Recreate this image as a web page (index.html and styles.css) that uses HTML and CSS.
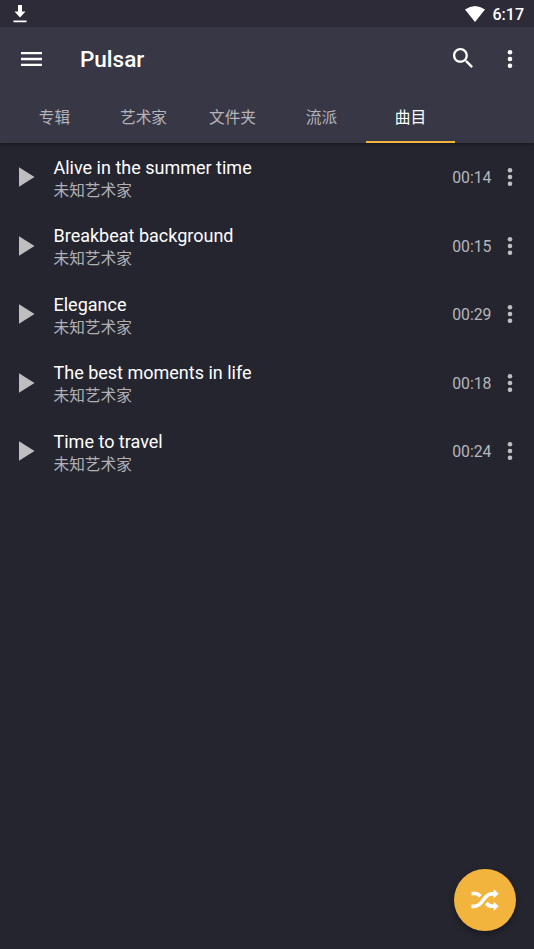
FILE: index.html
```html
<!DOCTYPE html>
<html lang="zh-CN">
<head>
<meta charset="utf-8">
<title>Pulsar</title>
<link rel="stylesheet" href="styles.css">
</head>
<body>
<svg class="defs" aria-hidden="true">
  <symbol id="play" viewBox="0 0 16 20"><path d="M0 0.3L15.5 10L0 19.7Z"/></symbol>
  <symbol id="dots" viewBox="0 0 6 20"><circle cx="3" cy="3.2" r="2.3"/><circle cx="3" cy="10" r="2.3"/><circle cx="3" cy="16.8" r="2.3"/></symbol>
</svg>
<header class="header">
  <div class="status">
    <svg class="download" viewBox="0 0 14 18"><path d="M5 0h4v6.500h3.500L7 12.500 1.500 6.500H5zM.5 15.500h13v1.800H.5z"/></svg>
    <svg class="wifi" viewBox="0 0 20 16"><path d="M0 3.500Q10-3.500 20 3.500L10 16Z"/></svg>
    <span class="clock">6:17</span>
  </div>
  <div class="toolbar">
    <svg class="menu" viewBox="0 0 21 14"><path d="M0 0h21v2.300H0zM0 5.850h21v2.300H0zM0 11.700h21V14H0z"/></svg>
    <h1 class="title">Pulsar</h1>
    <svg class="search" viewBox="3 3 17.500 17.500"><path d="M15.500 14h-.79l-.28-.27C15.410 12.590 16 11.110 16 9.500 16 5.910 13.090 3 9.500 3S3 5.910 3 9.500 5.910 16 9.500 16c1.610 0 3.090-.59 4.230-1.570l.27.28v.79l5 4.990L20.490 19l-4.990-5zm-6 0C7.010 14 5 11.990 5 9.500S7.010 5 9.500 5 14 7.010 14 9.500 11.990 14 9.500 14z"/></svg>
    <svg class="dots"><use href="#dots"/></svg>
  </div>
  <nav class="tabs">
    <span class="tab">专辑</span>
    <span class="tab">艺术家</span>
    <span class="tab">文件夹</span>
    <span class="tab">流派</span>
    <span class="tab active">曲目</span>
  </nav>
</header>
<main class="list">
  <div class="row"><svg class="play"><use href="#play"/></svg><div class="info"><div class="name">Alive in the summer time</div><div class="artist">未知艺术家</div></div><span class="time">00:14</span><svg class="dots"><use href="#dots"/></svg></div>
  <div class="row"><svg class="play"><use href="#play"/></svg><div class="info"><div class="name">Breakbeat background</div><div class="artist">未知艺术家</div></div><span class="time">00:15</span><svg class="dots"><use href="#dots"/></svg></div>
  <div class="row"><svg class="play"><use href="#play"/></svg><div class="info"><div class="name">Elegance</div><div class="artist">未知艺术家</div></div><span class="time">00:29</span><svg class="dots"><use href="#dots"/></svg></div>
  <div class="row"><svg class="play"><use href="#play"/></svg><div class="info"><div class="name">The best moments in life</div><div class="artist">未知艺术家</div></div><span class="time">00:18</span><svg class="dots"><use href="#dots"/></svg></div>
  <div class="row"><svg class="play"><use href="#play"/></svg><div class="info"><div class="name">Time to travel</div><div class="artist">未知艺术家</div></div><span class="time">00:24</span><svg class="dots"><use href="#dots"/></svg></div>
</main>
<button class="fab" aria-label="随机播放">
  <svg class="shuffle" viewBox="0 0 28 22"><g class="strokes"><path d="M0.500 4.500H4Q7 4.500 9.300 7.300"/><path d="M0.500 17.300H4C12 17.300 12.500 4.800 20.500 4.800H23.500"/><path d="M15.300 14Q17.800 17.200 20.500 17.200H23.500"/></g><path d="M22.700 0.300L27.700 4.800L22.700 9.300ZM22.700 12.700L27.700 17.200L22.700 21.700Z"/></svg>
</button>
</body>
</html>
```
FILE: styles.css
```css
* { box-sizing: border-box; }
body {
  margin: 0;
  height: 949px;
  overflow: hidden;
  background: #25252f;
  color: #fff;
  font-family: Roboto, "Noto Sans CJK SC", sans-serif;
}
svg { display: block; flex: none; fill: currentColor; }
.defs { position: absolute; width: 0; height: 0; }
.header {
  position: relative;
  height: 143px;
  background: #383745;
  box-shadow: 0 1px 4px rgba(0, 0, 0, .45);
}
.status {
  display: flex;
  align-items: center;
  height: 27px;
  padding: 0 10px 0 13px;
  background: #2c2b37;
}
.download { width: 14px; height: 18px; }
.wifi { width: 20px; height: 16px; margin: 0 8px 0 auto; }
.clock { font-size: 16px; font-weight: 500; line-height: 27px; padding-top: 1px; }
.toolbar {
  display: flex;
  align-items: center;
  height: 63px;
  padding: 0 21.500px 0 21px;
}
.menu { width: 21px; height: 14px; }
.title { margin: 0 auto 0 38px; font-size: 22.500px; font-weight: 500; line-height: 30px; }
.search { width: 20px; height: 20px; margin: 0 34px 1px 0; }
.dots { width: 6px; height: 20px; }
.tabs { display: flex; height: 53px; padding-left: 10px; }
.tab {
  width: 89px;
  height: 53px;
  color: #b4b3ba;
  font-size: 15.700px;
  line-height: 55px;
  text-align: center;
}
.active { color: #fff; border-bottom: 2px solid #f2b53c; }
.row {
  display: flex;
  align-items: center;
  height: 68.500px;
  padding: 0 21px 0 19px;
}
.play { width: 16px; height: 20px; color: #bebec1; }
.info { flex: 1; margin-left: 18.500px; padding-top: 3px; }
.name { font-size: 18px; line-height: 24px; }
.artist { color: #b0b0b5; font-size: 15.700px; line-height: 22px; }
.time { color: #b6b6ba; font-size: 15.800px; margin-right: 15.500px; padding-top: 1px; }
.row .dots { color: #bebec1; }
.fab {
  position: absolute;
  left: 454px;
  top: 869px;
  display: grid;
  place-items: center;
  width: 62px;
  height: 62px;
  padding: 0;
  border: 0;
  border-radius: 50%;
  background: #f3b43d;
  color: #fff;
  box-shadow: 0 3px 6px rgba(0, 0, 0, .35);
}
.shuffle { width: 28px; height: 22px; }
.strokes { fill: none; stroke: currentColor; stroke-width: 3.700; }
```
